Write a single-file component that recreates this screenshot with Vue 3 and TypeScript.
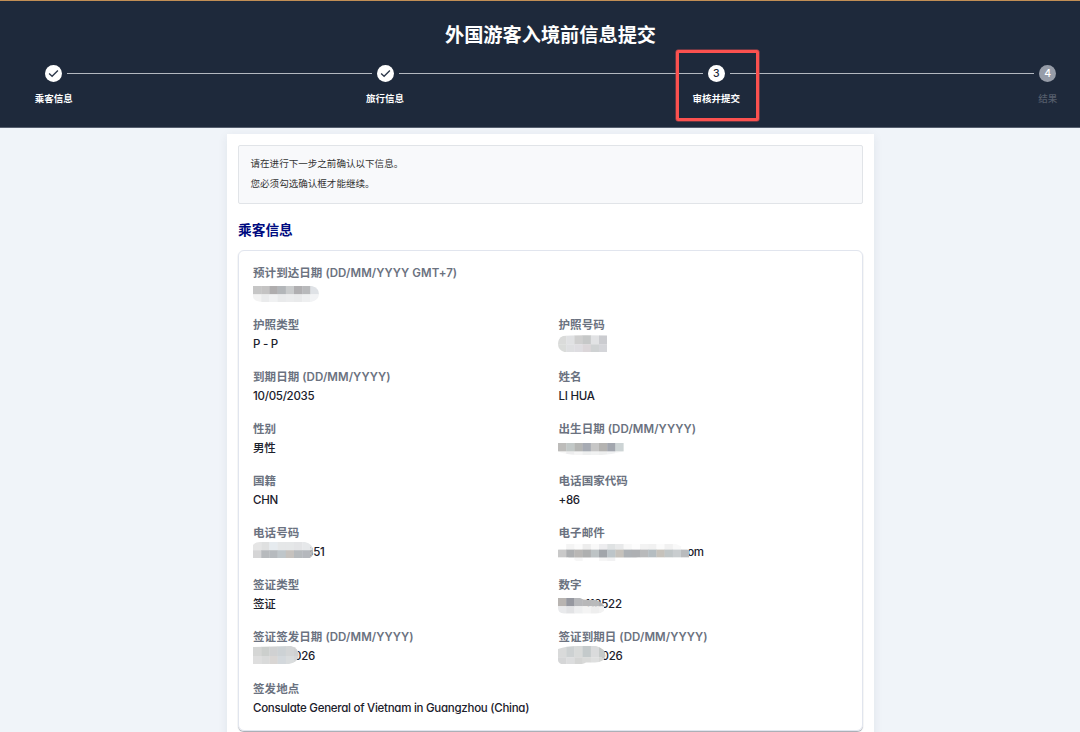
<script setup lang="ts">
interface Mosaic {
  width: number
  top: number
  heights: number[]
  rows: string[][]
  shape: string
}

interface Field {
  label: string
  value?: string
  inset?: number
  wide?: boolean
  right?: boolean
  mosaic?: Mosaic
}

interface Step {
  label: string
  state: 'done' | 'current' | 'pending'
}

const CELL = 8.2

const steps: Step[] = [
  { label: '乘客信息', state: 'done' },
  { label: '旅行信息', state: 'done' },
  { label: '审核并提交', state: 'current' },
  { label: '结果', state: 'pending' },
]

const fields: Field[] = [
  {
    label: '预计到达日期 (DD/MM/YYYY GMT+7)',
    wide: true,
    mosaic: {
      width: 66, top: 2.7, heights: [8.3, 8],
      rows: [
        ['#c6c6c6', '#c4c3c3', '#afadae', '#b3b6b9', '#c9cbcc', '#b0afb1', '#b8b9bb', '#dfe2e6'],
        ['#f3f3f3', '#eaebec', '#f0f1f2', '#e9eaeb', '#ebeced', '#e9eaeb', '#eeeff0', '#f2f3f5'],
      ],
      shape: 'M0 0H59Q66 2 66 8T58 16H9Q0 15 0 11Z',
    },
  },
  { label: '护照类型', value: 'P - P' },
  {
    label: '护照号码',
    right: true,
    mosaic: {
      width: 49.2, top: -0.5, heights: [9.3, 8.4],
      rows: [
        ['#dadbda', '#e0e1e3', '#cfcfcf', '#c6c8c8', '#e1e2e4', '#cbccd0'],
        ['#dadcda', '#dedfe1', '#dedde1', '#dbd6d9', '#cfd2d3', '#d4d5d9'],
      ],
      shape: 'M5 1Q12 0 49.2 0.5V17.7H9Q0 16 0 9Q0 3 5 1Z',
    },
  },
  { label: '到期日期 (DD/MM/YYYY)', value: '10/05/2035' },
  { label: '姓名', value: 'LI HUA', right: true },
  { label: '性别', value: '男性' },
  {
    label: '出生日期 (DD/MM/YYYY)',
    right: true,
    mosaic: {
      width: 65.7, top: 3.7, heights: [8.5, 4],
      rows: [
        ['#bdbcba', '#c2c8c7', '#b5b6b4', '#a7abb3', '#c6c6c6', '#b4b3b1', '#a2a6ae', '#cdd4d5'],
        ['#f8f8f8', '#ededee', '#f5f5f5', '#eeefef', '#f1f2f2', '#eeefef', '#f1f2f3', '#f7f8f8'],
      ],
      shape: 'M0 0H65.7V8.5Q50 12.5 30 12.5Q8 12 0 8.5Z',
    },
  },
  { label: '国籍', value: 'CHN' },
  { label: '电话国家代码', value: '+86', right: true },
  {
    label: '电话号码', value: '351', inset: 53.3,
    mosaic: {
      width: 60, top: -1.3, heights: [8.2, 8.2],
      rows: [
        ['#e5e5e5', '#dfe0e0', '#e6ebef', '#e5e7e8', '#e5e7e8', '#e3e4e6', '#e6e8ea', '#dee0e3'],
        ['#d5d5d6', '#b7babd', '#b6babe', '#bfc6ca', '#c6c2be', '#b6babd', '#b5b8bd', '#b6b7b8'],
      ],
      shape: 'M0 3Q2 0 7 0H52Q60 2 60 9T55 16.4H0Z',
    },
  },
  {
    label: '电子邮件', value: 'om', inset: 128.7, right: true,
    mosaic: {
      width: 131.2, top: 0.8, heights: [5.6, 8, 4],
      rows: [
        ['#fff', '#f4f4f4', '#fbfbfb', '#ededed', '#f9f9f9', '#ededef', '#dfe2e3', '#e8e9ea', '#f8f8f8', '#fdfdfd', '#f3f3f3', '#f1f1f1', '#fbfbfb', '#f1f1f1', '#f9f9f9', '#fff'],
        ['#c9c9c9', '#adafb1', '#b9b7b5', '#afb0b0', '#bdc3c5', '#a2a6ab', '#bdc5c9', '#c6c2bc', '#adb1b5', '#aeb0b3', '#b9babb', '#b5bdc1', '#c6c2bb', '#c0c6c7', '#c9cdcf', '#b9bbbd'],
        ['#fff', '#fff', '#f6f6f6', '#fff', '#fff', '#f6f6f6', '#f2f2f3', '#fff', '#fff', '#fff', '#fff', '#fff', '#fff', '#fff', '#fff', '#fff'],
      ],
      shape: 'M0 5.5L8 0H118L131.2 6V13.6H80L60 17.6H20L10 13.6H0Z',
    },
  },
  { label: '签证类型', value: '签证' },
  {
    label: '数字', value: '113522', inset: 26.8, right: true,
    mosaic: {
      width: 47, top: 3, heights: [8.2, 7.5],
      rows: [
        ['#b8b4b1', '#9698a0', '#b7b8bb', '#b8b8b9', '#b9babb', '#aeb0b3'],
        ['#e9eaec', '#e2e3e5', '#eeeff0', '#f4f4f4', '#eeeeee', '#f2f2f2'],
      ],
      shape: 'M0 0H22Q25 2 30 2H38Q43 3.5 46 8V13Q43 15.6 38 15.6H6Q0 15 0 10Z',
    },
  },
  {
    label: '签证签发日期 (DD/MM/YYYY)', value: '026', inset: 41,
    mosaic: {
      width: 45.7, top: -1, heights: [10, 8],
      rows: [
        ['#d5d6d5', '#cccfcd', '#d0d1d2', '#cdd2d5', '#d3d5d6', '#cfd1d2'],
        ['#dedede', '#d9dada', '#d9d6d4', '#d3d8dc', '#d9dcdd', '#d5d7d8'],
      ],
      shape: 'M0 1L38 0Q45.7 2 45.7 9T36 18H0Z',
    },
  },
  {
    label: '签证到期日 (DD/MM/YYYY)', value: '026', inset: 43, right: true,
    mosaic: {
      width: 47.7, top: -1.3, heights: [11.3, 7],
      rows: [
        ['#d9dada', '#cdd1d2', '#d8dad9', '#c4cacb', '#dadbdc', '#c6cac9'],
        ['#d5d6d7', '#dcddde', '#d4d5d4', '#d9dad9', '#dedfdf', '#d6d7d6'],
      ],
      shape: 'M0 3Q8 0 20 0H38Q47 2 47.7 10Q46 16 37 16.5H28Q25 18.3 19 18.3H4Q0 17 0 14Z',
    },
  },
  { label: '签发地点', value: 'Consulate General of Vietnam in Guangzhou (China)', wide: true },
]

const mosaicHeight = (m: Mosaic): number => m.heights.reduce((sum, h) => sum + h, 0)
const rowTop = (m: Mosaic, row: number): number => m.heights.slice(0, row).reduce((sum, h) => sum + h, 0)
</script>

<template>
  <div class="page">
    <header class="header">
      <h1 class="title">外国游客入境前信息提交</h1>
      <div class="stepper">
        <template v-for="(step, i) in steps" :key="step.label">
          <span v-if="i > 0" class="line"></span>
          <div class="step" :class="step.state">
            <span class="dot">
              <svg v-if="step.state === 'done'" width="17" height="17" viewBox="0 0 17 17">
                <path d="M4.1 8.5 7.1 11.2 12.9 5.4" fill="none" stroke="#303b4d" stroke-width="1.4" />
              </svg>
              <template v-else>{{ i + 1 }}</template>
            </span>
            <span class="step-label">{{ step.label }}</span>
            <span v-if="step.state === 'current'" class="highlight"></span>
          </div>
        </template>
      </div>
    </header>

    <main class="panel">
      <div class="notice">
        <p>请在进行下一步之前确认以下信息。</p>
        <p>您必须勾选确认框才能继续。</p>
      </div>
      <h2 class="section-title">乘客信息</h2>
      <section class="card">
        <div
          v-for="(field, i) in fields"
          :key="field.label"
          class="field"
          :class="{ wide: field.wide, right: field.right }"
        >
          <div class="label">{{ field.label }}</div>
          <div class="value">
            <span class="text" :style="{ paddingLeft: (field.inset ?? 0) + 'px' }">{{ field.value }}</span>
            <svg
              v-if="field.mosaic"
              class="mosaic"
              :style="{ top: field.mosaic.top + 'px' }"
              :width="field.mosaic.width"
              :height="mosaicHeight(field.mosaic)"
            >
              <clipPath :id="'mask-' + i"><path :d="field.mosaic.shape" /></clipPath>
              <g :clip-path="`url(#mask-${i})`">
                <template v-for="(row, r) in field.mosaic.rows" :key="r">
                  <rect
                    v-for="(color, c) in row"
                    :key="c"
                    :x="c * CELL"
                    :y="rowTop(field.mosaic, r)"
                    :width="CELL + 0.3"
                    :height="field.mosaic.heights[r] + 0.2"
                    :fill="color"
                  />
                </template>
              </g>
            </svg>
          </div>
        </div>
      </section>
    </main>
  </div>
</template>

<style>
body {
  margin: 0;
  overflow: hidden;
}
</style>

<style scoped>
.page {
  box-sizing: border-box;
  height: 732px;
  overflow: hidden;
  background: #f0f4f9;
  font-family: Inter, "Noto Sans CJK SC", sans-serif;
  font-feature-settings: "cv11", "ss03";
}

.header {
  box-sizing: border-box;
  height: 128px;
  border-top: 1px solid #c28e55;
  border-bottom: 1px solid #565f6f;
  background: #1e293b;
  color: #fff;
}

.title {
  margin: 0;
  padding: 20px 0 0 21px;
  font-size: 19.2px;
  line-height: 28px;
  font-weight: 700;
  text-align: center;
}

.stepper {
  display: flex;
  align-items: center;
  height: 17px;
  margin-top: 15.5px;
  padding: 0 23.8px 0 45.2px;
}

.line {
  flex: 1;
  height: 1px;
  margin: 0 4.8px 0 5px;
  background: #b3b8c0;
}

.step {
  position: relative;
  width: 17px;
  height: 17px;
}

.dot {
  display: flex;
  align-items: center;
  justify-content: center;
  width: 17px;
  height: 17px;
  border-radius: 50%;
  background: #fff;
  color: #1e293b;
  font-size: 10.5px;
  font-weight: 500;
}

.step-label {
  position: absolute;
  top: 26px;
  left: 50%;
  transform: translateX(-50%);
  font-size: 9.5px;
  line-height: 16px;
  font-weight: 700;
  white-space: nowrap;
}

.pending .dot {
  background: #969ca8;
  color: #fff;
}

.pending .step-label {
  color: #555d6b;
  font-weight: 500;
}

.highlight {
  position: absolute;
  top: -14.6px;
  left: -31.8px;
  width: 77px;
  height: 65px;
  border: 3px solid #fb514f;
  border-radius: 2px;
  box-shadow: 0 0 0 0.5px #b5444b;
}

.panel {
  box-sizing: border-box;
  width: 647px;
  height: 640px;
  margin: 6px 0 0 227px;
  padding: 11px 11px 0;
  background: #fff;
  box-shadow: 0 2px 10px rgba(30, 41, 59, 0.07);
}

.notice {
  box-sizing: border-box;
  height: 59px;
  padding: 8px 11.5px;
  border: 1px solid #e1e4e8;
  border-radius: 2px;
  background: #f8f9fb;
  color: #333;
  font-size: 9.55px;
}

.notice p {
  margin: 0;
  line-height: 20px;
}

.section-title {
  margin: 16px 0 0;
  height: 30px;
  color: #000b80;
  font-size: 13.7px;
  line-height: 21px;
  font-weight: 700;
}

.card {
  box-sizing: border-box;
  display: grid;
  grid-template-columns: 1fr 1fr;
  grid-auto-rows: 52px;
  column-gap: 16px;
  height: 481px;
  padding: 12px 14px 0;
  border: 1px solid #e1e5ee;
  border-radius: 6px;
  box-shadow: 0 1px 1px rgba(70, 80, 95, 0.5);
}

.wide {
  grid-column: 1 / -1;
}

.label {
  height: 20px;
  color: #6b7280;
  font-size: 11.5px;
  line-height: 21px;
  letter-spacing: 0.07px;
  font-weight: 600;
  white-space: nowrap;
}

.value {
  position: relative;
  height: 20px;
  color: #1b202b;
  font-size: 11.5px;
  line-height: 19px;
  letter-spacing: -0.27px;
  font-weight: 500;
  white-space: nowrap;
}

.mosaic {
  position: absolute;
  left: 0;
}

.right .mosaic {
  left: -0.6px;
}
</style>
